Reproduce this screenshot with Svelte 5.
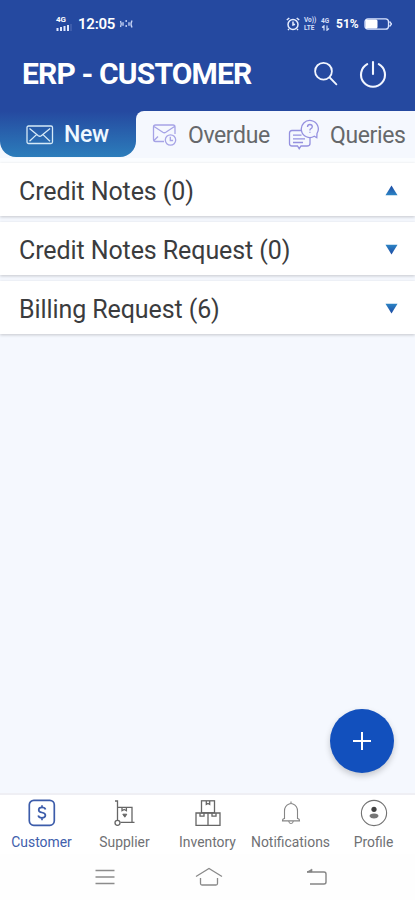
<script>
  const rows = [
    { label: 'Credit Notes (0)', open: true },
    { label: 'Credit Notes Request (0)', open: false },
    { label: 'Billing Request (6)', open: false }
  ];
</script>

<div class="screen">
  <header>
    <div class="status">
      <div class="left">
        <div class="signal"><span>4G</span>
          <svg width="16" height="7" viewBox="0 0 16 7"><path d="M1.5 4v3M5 3v4M8.5 2v5M12 1v6" stroke="#dfe8ff" stroke-width="2"/><path d="M15 0v7" stroke="#5873b8" stroke-width="1"/></svg>
        </div>
        <span class="time">12:05</span>
        <svg class="wave" width="15" height="12" viewBox="0 0 15 12" fill="none" stroke="#c4d2f4" stroke-width="1.4"><path d="M1.5 3q1.5 3 0 6M4 4.3v3.4M7.2 2v2M7.2 7v2M10 4.3v3.4M13 2.5q-2 3.5 0 7"/></svg>
      </div>
      <div class="right">
        <svg width="14" height="14" viewBox="0 0 14 14" fill="none" stroke="#e7eeff" stroke-width="1.5"><circle cx="7" cy="7.5" r="5"/><path d="M.8 3l2.5-2M13.2 3l-2.5-2M7 4.5V8l2-.8M3 12l-1 1M11 12l1 1"/></svg>
        <div class="mini volte"><span>Vo))</span><span>LTE</span></div>
        <div class="mini"><span>4G</span>
          <svg width="9" height="6" viewBox="0 0 9 6" fill="none" stroke="#d4dff8" stroke-width="1.2"><path d="M1 2.5L3 .8V5.5M6 .5v4.7l2-1.7"/></svg>
        </div>
        <span class="pct">51%</span>
        <svg width="28" height="12" viewBox="0 0 28 12"><rect x="1" y=".8" width="23.5" height="10.4" rx="3" fill="none" stroke="#dce6ff" stroke-width="1.3"/><rect x="1.5" y="1.5" width="12" height="9" rx="1.5" fill="#fff"/><path d="M25.5 3.5l2 2.5-2 2.5" fill="none" stroke="#dce6ff" stroke-width="1.3"/></svg>
      </div>
    </div>
    <div class="bar">
      <h1>ERP - CUSTOMER</h1>
      <svg class="search" width="26" height="26" viewBox="0 0 26 26" fill="none" stroke="#f2f6ff" stroke-width="1.8" stroke-linecap="round"><circle cx="10.5" cy="10.2" r="8.4"/><path d="M16.7 16.5l6.7 6.8"/></svg>
      <svg width="28" height="28" viewBox="0 0 28 28" fill="none" stroke="#f2f6ff" stroke-width="2.1" stroke-linecap="round"><path d="M14 2v12M8.2 4.2a12 12 0 1 0 11.6 0"/></svg>
    </div>
  </header>

  <nav class="tabs">
    <div class="tab active">
      <svg width="28" height="20" viewBox="0 0 28 20" fill="none" stroke="#d6eaf8" stroke-width="1.3"><rect x="1" y="1" width="25.5" height="17.5" rx="1.5"/><path d="M3.5 3.5l8.8 7.2q1.5 1.1 3 0l8.8-7.2M3.5 16.2l7-6.6M24 16.2l-7-6.6"/></svg>
      <span>New</span>
    </div>
    <div class="tab overdue">
      <svg width="25" height="23" viewBox="0 0 25 23" fill="none" stroke="#a6a3e6" stroke-width="1.3"><path d="M12 17.5H3.5Q1.5 17.5 1.5 15.5V3Q1.5 1 3.5 1H21Q23 1 23 3v7M2 2.5l8.8 5.8q1.5.9 3 0L22.5 2.5M2 16.5l4-4"/><circle cx="18.5" cy="16" r="5.2"/><path d="M18.3 12.8v3.7h2.8"/></svg>
      <span>Overdue</span>
    </div>
    <div class="tab queries">
      <svg width="32" height="32" viewBox="0 0 32 32" fill="none" stroke="#9490df" stroke-width="1.3"><path d="M13.5 11.5H4Q1.5 11.5 1.5 14v10.5Q1.5 27 4 27h5.5l1.7 2.7 1.8-2.7h6Q22 27 22 24.5V19M5 16.2h8.5M5 19.8h12M5 23.5h10"/><path d="M26.3 17.2A8.5 8.5 0 1 1 29 14.5l-.2 4.2z"/><path d="M19.5 8q0-2.5 2.4-2.5t2.4 2.3q0 1.4-1.6 2-.8.4-.8 1.6M21.9 12.8v1"/></svg>
      <span>Queries</span>
    </div>
  </nav>

  <main>
    {#each rows as row}
      <div class="row">
        <span>{row.label}</span>
        <svg class:flip={row.open} width="13" height="11" viewBox="0 0 13 11"><defs><linearGradient id="arrow" x1="0" y1="0" x2="0" y2="1"><stop offset="0" stop-color="#2c84c4"/><stop offset="1" stop-color="#1d4aa4"/></linearGradient></defs><path d="M.5 .7h12L6.5 10.5z" fill="url(#arrow)"/></svg>
      </div>
    {/each}
    <button class="fab" aria-label="Add"><svg width="20" height="20" viewBox="0 0 20 20"><path d="M10 1v18M1 10h18" stroke="#fff" stroke-width="2"/></svg></button>
  </main>

  <nav class="bottom">
    <div class="item sel">
      <svg width="28" height="28" viewBox="0 0 28 28" fill="none" stroke="#3c5caa" stroke-width="1.7"><rect x="1.3" y="1.3" width="25" height="25" rx="4.5"/><path d="M17.5 10.5q-.6-2.1-3.6-2.1-3.2 0-3.2 2.5 0 2 3.2 2.6 3.5.6 3.5 2.8 0 2.6-3.5 2.6-3.1 0-3.7-2.4M14 6.2v2M14 19v2.3"/></svg>
      <span>Customer</span>
    </div>
    <div class="item">
      <svg width="28" height="28" viewBox="0 0 28 28" fill="none" stroke="#666" stroke-width="1.3"><path d="M4 2h2.5v19.5M6.5 8.3H21v15M9.5 23.4H23.5M11 8.5v3.2l2.2-1.2 2.2 1.2V8.5"/><circle cx="6.5" cy="23.8" r="2.5"/><path d="M11.8 15.2h4l-2 3z" fill="#666" stroke-width="1"/></svg>
      <span>Supplier</span>
    </div>
    <div class="item">
      <svg width="28" height="28" viewBox="0 0 28 28" fill="none" stroke="#666" stroke-width="1.3"><rect x="7.5" y="1.8" width="13" height="12"/><path d="M12.3 2v3.4l1.7-1 1.7 1V2M2 14h24v12.3H2zM14 14v12M6 14v3.2h4V14M18 14v3.2h4V14"/></svg>
      <span>Inventory</span>
    </div>
    <div class="item">
      <svg width="28" height="28" viewBox="0 0 28 28" fill="none" stroke="#858585" stroke-width="1.1"><path d="M14 2.5v2M7.5 19.5v-7.5q0-5 4.5-7 2-1 4 0 4.5 2 4.5 7v7.5q2 0 2 2.4H5.5Q5.5 19.5 7.5 19.5zM11.8 22.5q.3 2 2.2 2t2.2-2"/></svg>
      <span>Notifications</span>
    </div>
    <div class="item">
      <svg width="28" height="28" viewBox="0 0 28 28"><circle cx="14" cy="14" r="12.6" fill="none" stroke="#727272" stroke-width="1.1"/><circle cx="14" cy="10.3" r="2.6" fill="#414141"/><path d="M9.5 17.2q0-2.6 4.5-2.6t4.5 2.6q-1 2.2-4.5 2.2t-4.5-2.2" fill="#777"/></svg>
      <span>Profile</span>
    </div>
  </nav>

  <footer>
    <svg width="20" height="18" viewBox="0 0 20 18" stroke="#8c8c8c" stroke-width="1.5"><path d="M.5 2.5h19M.5 9h19M.5 15.5h19"/></svg>
    <svg width="28" height="20" viewBox="0 0 28 20" fill="none" stroke="#898989" stroke-width="1.3"><path d="M1 9.5L14 1.5l13 8M5.5 11v5.5q0 1.5 1.5 1.5h14q1.5 0 1.5-1.5V11"/></svg>
    <svg width="22" height="18" viewBox="0 0 22 18" fill="none" stroke="#858585" stroke-width="1.4"><path d="M1 4h17q2 0 2 2v8q0 2-2 2H4"/><path d="M1 4l5-3v3z" fill="#858585" stroke-width=".6"/></svg>
  </footer>
</div>

<style>
  :global(body) { margin: 0; }
  .screen { width: 415px; height: 900px; display: flex; flex-direction: column; background: #f5f8fe; font-family: Roboto, sans-serif; overflow: hidden; }
  svg { display: block; flex-shrink: 0; }
  header { height: 111px; box-sizing: border-box; background: #2549a0; color: #fff; padding-top: 13px; flex-shrink: 0; }
  .status { height: 21px; display: flex; align-items: center; justify-content: space-between; padding: 0 23px 0 56px; }
  .left, .right { display: flex; align-items: center; }
  .signal { display: flex; flex-direction: column; width: 16px; }
  .signal span { font-size: 8px; line-height: 8px; font-weight: 700; }
  .time { font-size: 15px; font-weight: 600; margin-left: 6px; width: 38px; letter-spacing: -.25px; }
  .wave { margin-left: 3px; }
  .mini { display: flex; flex-direction: column; font-size: 6.5px; line-height: 8px; font-weight: 700; color: #d4dff8; width: 11px; margin-left: 2px; }
  .mini.volte { width: 15px; margin-left: 4px; }
  .pct { font-size: 12px; font-weight: 700; margin-left: 4px; width: 24px; }
  .right > svg:last-child { margin-left: 4px; }
  .bar { display: flex; align-items: center; height: 80px; padding: 0 28px 0 22px; }
  h1 { margin: 0; font-size: 30px; line-height: 36px; font-weight: 700; letter-spacing: -.85px; flex: 1; white-space: nowrap; }
  .search { margin-right: 20px; }
  .tabs { height: 47px; flex-shrink: 0; display: flex; background: linear-gradient(90deg, #2549a0 145px, #f5f8fe 145px) top / 100% 9px no-repeat, #f5f8fe; }
  .tab { display: flex; align-items: center; font-size: 23px; letter-spacing: -.38px; color: #66686b; box-sizing: border-box; white-space: nowrap; }
  .active { width: 136px; height: 46px; padding: 1px 0 0 26px; background: linear-gradient(#2549a0, #2c7dbb); color: #eff8ff; border-radius: 0 0 16px 16px; font-weight: 500; }
  .active span { margin-left: 10px; }
  .overdue { width: 151px; background: #f5f8fe; border-top-left-radius: 8px; padding: 1px 0 0 16px; }
  .overdue span { margin-left: 11px; }
  .queries { padding: 1px 0 0 1px; }
  .queries span { margin-left: 10px; }
  main { flex: 1; position: relative; padding-top: 5px; background: linear-gradient(#fbfdff, #fbfdff) top / 100% 5px no-repeat; }
  .row { height: 53px; margin-bottom: 6px; box-sizing: border-box; background: #fff; box-shadow: 0 1px 3px #0003; display: flex; align-items: center; justify-content: space-between; padding: 2px 17px 0 19px; font-size: 25px; letter-spacing: -.09px; color: #3b3c3e; white-space: nowrap; }
  .row span { padding-top: 2px; }
  .flip { transform: rotate(180deg); }
  .fab { position: absolute; right: 21px; bottom: 20px; width: 64px; height: 64px; border: 0; border-radius: 50%; background: #1250bd; display: grid; place-items: center; padding: 0; box-shadow: 0 3px 6px #0003; }
  .bottom { height: 61px; flex-shrink: 0; box-sizing: border-box; border-top: 2px solid #efeff4; background: #fff; display: flex; }
  .item { width: 83px; display: flex; flex-direction: column; align-items: center; padding-top: 4px; box-sizing: border-box; color: #707174; font-size: 13.9px; }
  .item span { line-height: 18px; margin-top: 6px; white-space: nowrap; }
  .sel { color: #4160ac; }
  footer { height: 46px; flex-shrink: 0; background: #fefefe; display: flex; align-items: center; justify-content: space-between; padding: 0 87px 1px 95px; box-sizing: border-box; }
  footer svg:nth-child(2) { margin-right: 3px; }
</style>
